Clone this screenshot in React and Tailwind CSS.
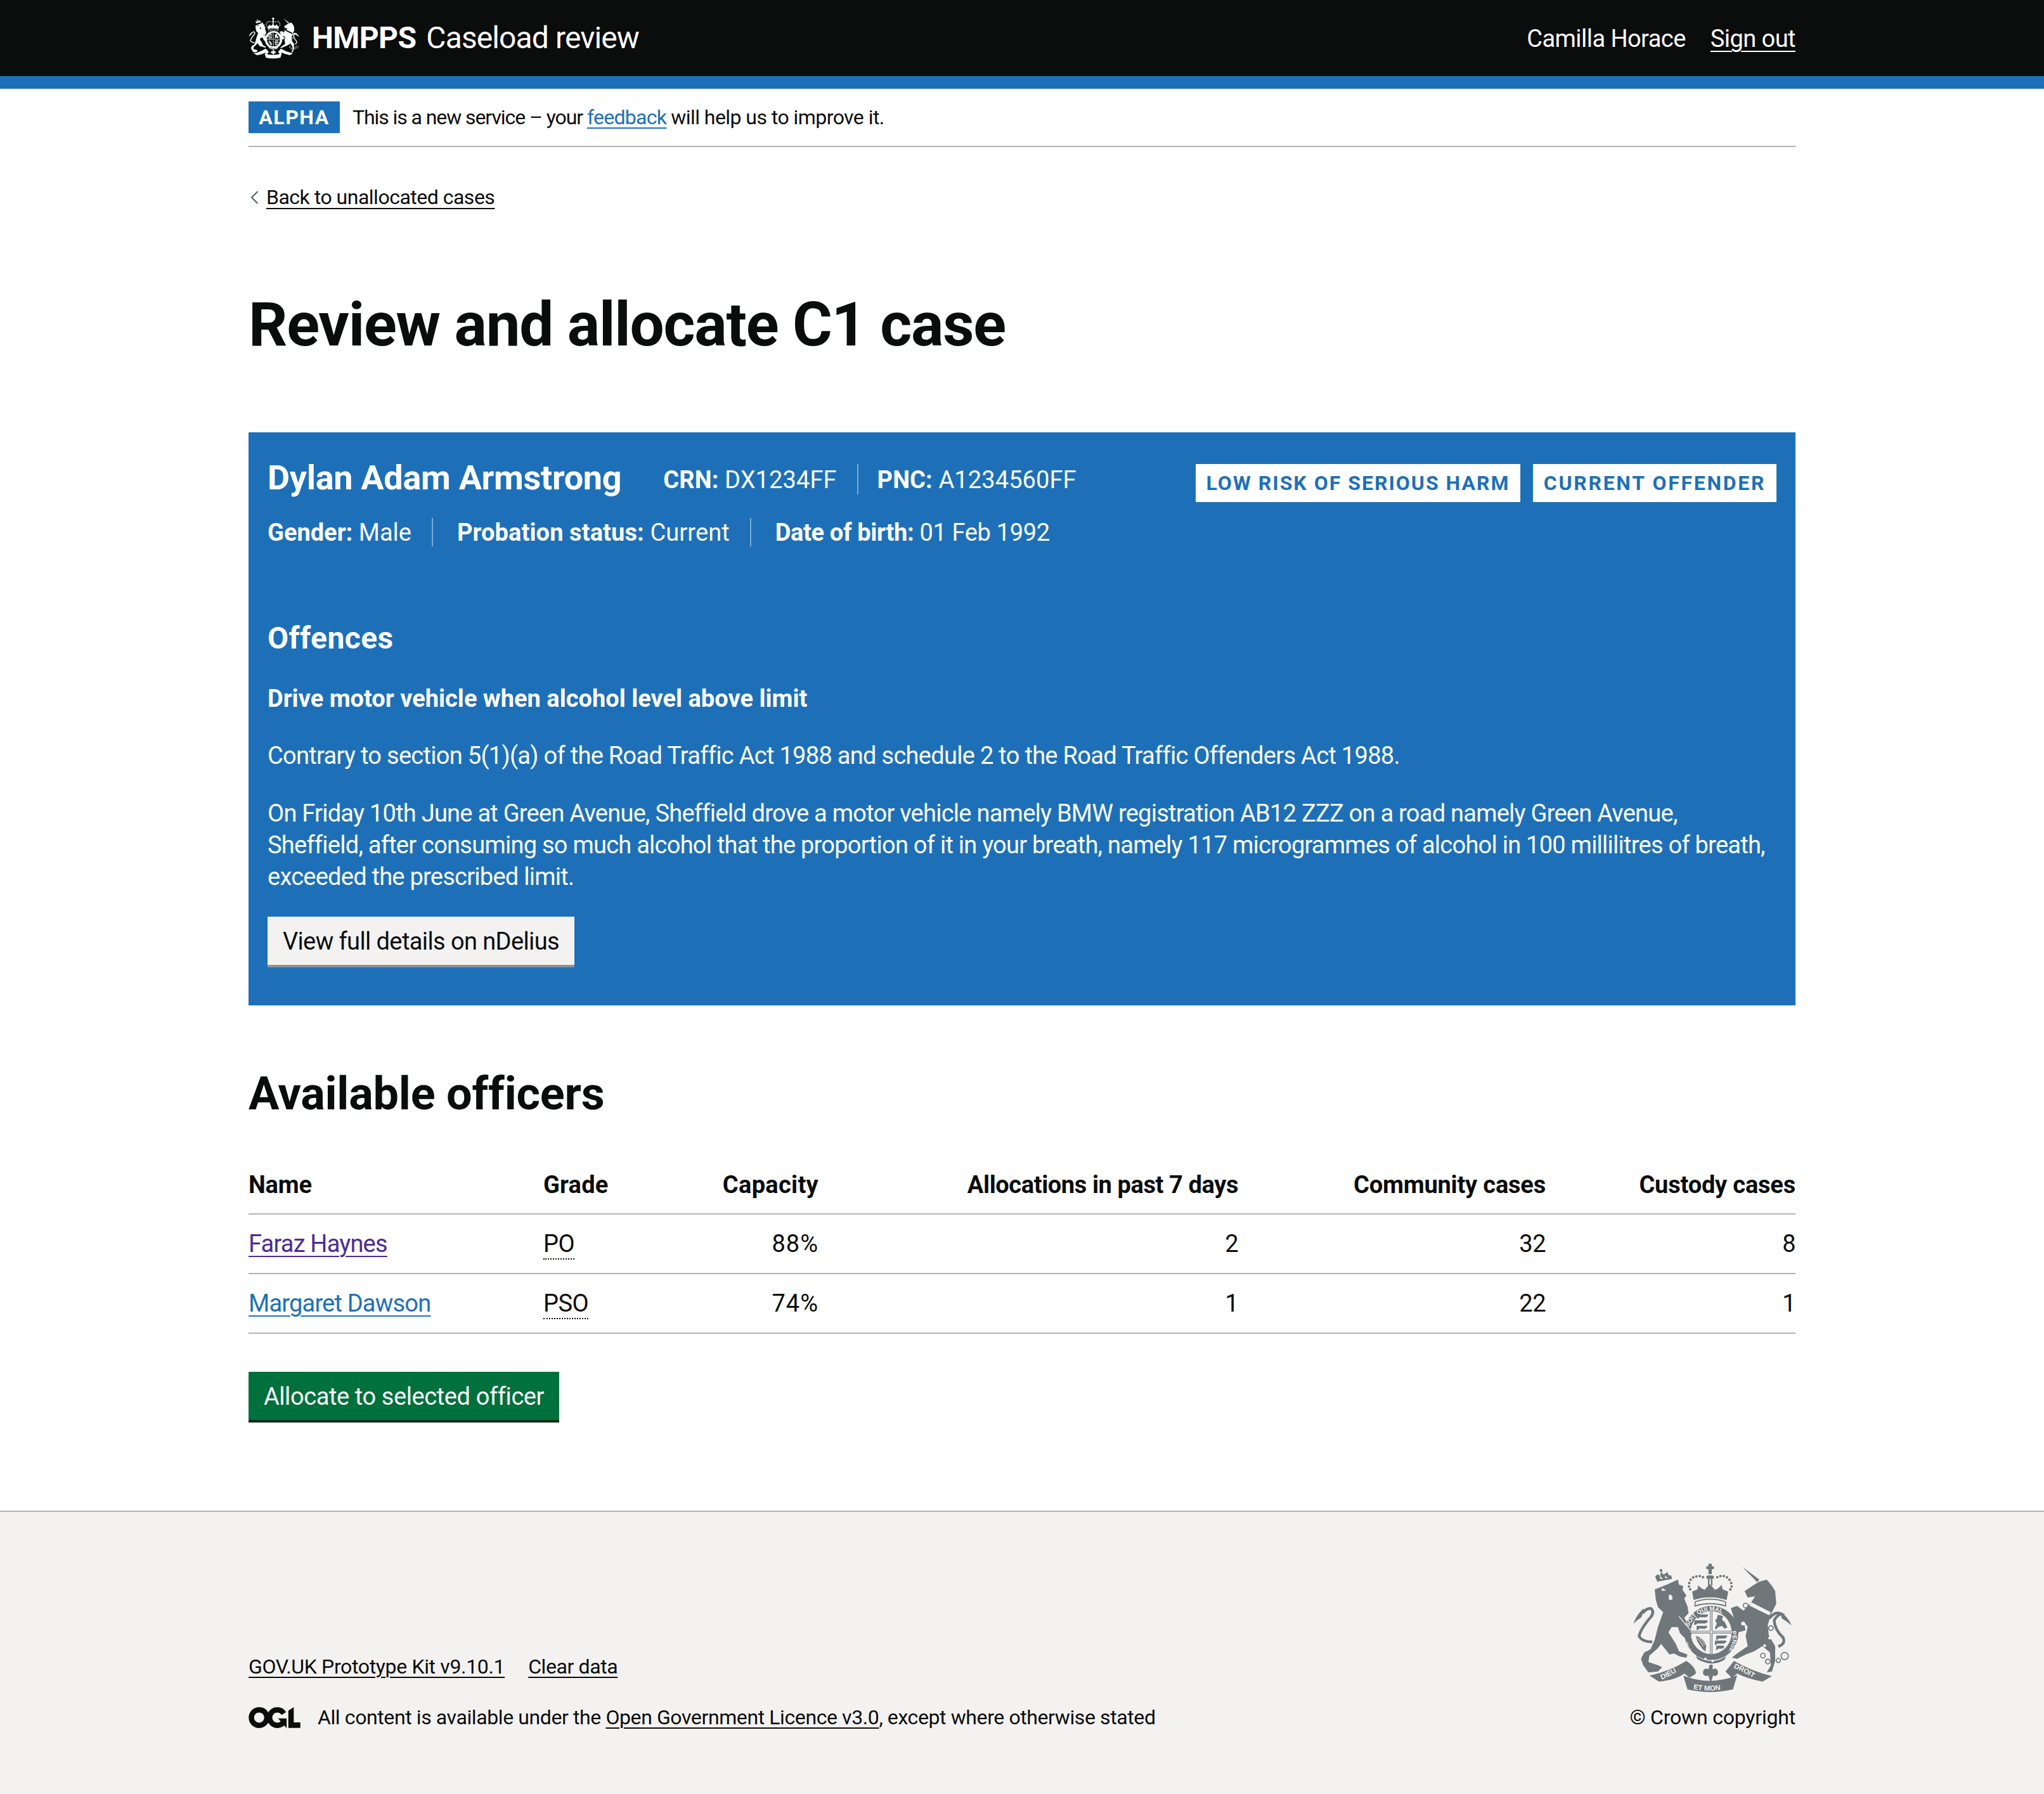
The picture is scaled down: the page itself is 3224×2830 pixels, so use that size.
const Crest = ({ color, bg, labels = true, className }) => (
  <svg viewBox="228 138 750 612" className={className} aria-hidden="true">
    <defs>
      <path id="garter-top" d="M488,455 A112,114 0 0 1 704,440" />
      <path id="garter-left" d="M520,572 A112,116 0 0 1 484,490" />
      <path id="garter-right" d="M692,455 A114,116 0 0 1 660,578" />
      <path id="ribbon-left" d="M358,692 Q420,665 468,628" />
      <path id="ribbon-mid" d="M505,732 Q592,750 682,730" />
      <path id="ribbon-right" d="M700,632 Q770,660 826,702" />
    </defs>
    {/* lion */}
    <path fill={color} d="M330,262 L385,240 L440,215 L445,240 L465,245 L462,265 L480,290 L470,305 L486,345 L490,375 L470,395 L500,450 L495,490 L470,490 L450,470 L440,440 L410,440 L395,465 L430,520 L445,555 L485,570 L480,585 L450,580 L420,565 L400,570 L360,520 L345,540 L305,575 L300,605 L345,620 L365,630 L345,650 L300,655 L275,620 L265,590 L280,560 L310,545 L330,500 L345,440 L370,370 L345,345 L335,310 Z" />
    <path d="M318,510 Q272,510 256,484 Q262,450 312,392 Q330,366 312,352 Q290,350 272,375" fill="none" stroke={color} strokeWidth="13" />
    <path d="M230,425 Q240,385 278,352 Q272,392 262,398 Q248,404 230,425 Z" fill={color} />
    <g fill={color}>
      <path d="M342,225 L332,200 L345,190 L356,198 L360,178 L372,192 L390,180 L396,194 L408,196 L412,212 Z" />
      <path d="M354,178 h12 v-12 h-12 z" />
    </g>
    <g fill={bg}>
      <path d="M352,196 l6,18 l10,-4 z M376,196 l6,14 l10,-4 z" />
      <path d="M365,255 L385,268 L362,268 Z" />
      <path d="M400,285 q16,4 14,24 l-14,4 q-8,-14 0,-28 z" />
    </g>
    {/* unicorn */}
    <g fill={color}>
      <path d="M745,155 L825,215 L815,228 Z" />
      <path d="M755,270 L800,240 L825,225 L860,215 L885,245 L900,270 L905,330 L880,380 L865,430 L870,480 L900,530 L900,600 L885,650 L860,655 L880,620 L875,560 L840,530 L800,555 L760,570 L720,590 L695,585 L720,565 L770,530 L760,480 L770,440 L750,410 L760,455 L725,465 L705,400 L690,350 L720,340 L750,362 L785,325 L805,295 L770,300 Z" />
    </g>
    <path d="M872,400 Q900,362 930,378 Q905,385 895,410 Q900,455 938,490 Q950,520 915,532" fill="none" stroke={color} strokeWidth="13" />
    <path d="M928,372 Q955,385 978,432 Q950,410 930,398 Z" fill={color} />
    <g fill={bg}>
      <path d="M785,322 L880,370 L872,385 L778,338 Z" />
      <circle cx="874" cy="492" r="7" />
      <circle cx="850" cy="528" r="7" />
      <circle cx="748" cy="424" r="9" />
    </g>
    <path d="M790,322 l8,-8 l6,12 l10,-4 l4,12 l12,-4 l4,12 l12,-4 l4,12 l12,-2 l6,10" fill="none" stroke={color} strokeWidth="5" />
    <g fill="none" stroke={color} strokeWidth="5">
      <circle cx="760" cy="338" r="11" />
      <circle cx="880" cy="445" r="11" />
      <circle cx="842" cy="575" r="11" />
      <circle cx="865" cy="603" r="11" />
      <circle cx="915" cy="598" r="10" />
      <circle cx="945" cy="577" r="17" />
    </g>
    {/* crown */}
    <g fill={color}>
      <path d="M584,140 h16 v12 h10 v14 h-10 v24 h-16 v-24 h-10 v-14 h10 z" />
      <rect x="582" y="212" width="7" height="32" />
      <rect x="596" y="212" width="7" height="32" />
      <rect x="574" y="196" width="36" height="16" rx="8" />
      {[[558, 204], [543, 199], [527, 200], [512, 205], [500, 216], [493, 232], [492, 248], [498, 262], [626, 204], [641, 199], [657, 199], [672, 205], [684, 216], [692, 232], [694, 248], [688, 262]].map(([cx, cy]) => (
        <circle key={cx} cx={cx} cy={cy} r="6" />
      ))}
      <path d="M507,272 L532,262 L536,242 L550,256 L566,264 L590,236 L616,264 L632,256 L646,240 L652,262 L678,272 L670,312 Q592,286 514,312 Z" />
    </g>
    <path d="M522,320 Q592,296 664,320 L666,340 Q592,318 520,340 Z" fill="none" stroke={color} strokeWidth="5" />
    {/* shield and garter */}
    <ellipse cx="598" cy="468" rx="128" ry="128" fill={color} />
    <ellipse cx="597" cy="466" rx="97" ry="102" fill={bg} />
    <g fill={color}>
      <rect x="591" y="365" width="12" height="203" />
      <rect x="500" y="458" width="196" height="12" />
    </g>
    <rect x="594" y="365" width="5" height="203" fill={bg} />
    <rect x="500" y="461" width="196" height="5" fill={bg} />
    <g fill={color}>
      <path d="M532,380 h50 v8 l-10,6 h-30 l-6,6 h-6 z" />
      <path d="M518,408 h62 v9 l-12,6 h-36 l-8,6 h-8 z" />
      <path d="M528,434 h50 v8 l-10,6 h-28 l-6,6 h-6 z" />
      <path d="M628,382 l26,6 l-6,16 l14,14 l12,24 l-14,6 l-12,-14 l-18,6 l-8,10 l-8,-4 l10,-22 l-8,-16 l8,-8 z" />
      <path d="M524,482 q34,6 50,46 l-4,28 q-34,-22 -46,-74 z" />
      <path d="M622,480 h50 v8 l-10,6 h-30 l-6,6 h-6 z" />
      <path d="M616,504 h52 v8 l-10,6 h-32 l-6,6 h-6 z" />
      <path d="M622,528 h36 v8 l-8,6 h-20 l-4,6 h-6 z" />
    </g>
    <path d="M533,492 l28,40 M543,490 l25,36 M529,508 l26,36" stroke={bg} strokeWidth="3" />
    {labels && (
      <g fill={bg} fontFamily="'Liberation Sans', sans-serif" fontWeight="700" fontSize="29">
        <text><textPath href="#garter-top" startOffset="5%">SOIT QUI MAL</textPath></text>
        <text><textPath href="#garter-left" startOffset="2%">HONI</textPath></text>
        <text><textPath href="#garter-right" startOffset="4%">PENSE</textPath></text>
      </g>
    )}
    <path d="M525,575 Q600,625 668,578 L660,595 Q600,632 532,592 Z" fill={color} />
    <circle cx="570" cy="590" r="6" fill={bg} />
    <circle cx="604" cy="600" r="6" fill={bg} />
    {/* lion's paw over the garter */}
    <path d="M445,390 L500,455" stroke={bg} strokeWidth="4" />
    <path d="M470,440 L505,470 L498,492 L470,490 Z" fill={color} />
    {/* motto ribbons */}
    <g fill={color}>
      <path d="M305,670 Q400,650 480,600 Q525,630 525,660 L495,680 L470,660 Q430,690 350,698 Z" />
      <path d="M465,670 Q590,720 720,668 L700,735 Q590,760 485,735 Z" />
      <path d="M665,650 Q690,620 705,600 Q790,650 885,672 L840,698 Q770,685 720,660 L695,680 Z" />
      <path d="M590,618 h14 v22 q22,-10 26,14 q-2,22 -24,16 l-8,26 h-6 l-8,-26 q-24,6 -26,-16 q4,-24 26,-14 z" />
    </g>
    {labels && (
      <g fill={bg} fontFamily="'Liberation Sans', sans-serif" fontWeight="700" fontSize="34">
        <text><textPath href="#ribbon-left" startOffset="5%">DIEU</textPath></text>
        <text><textPath href="#ribbon-mid" startOffset="4%">ET MON</textPath></text>
        <text><textPath href="#ribbon-right" startOffset="2%">DROIT</textPath></text>
      </g>
    )}
  </svg>
);

const OglLogo = () => (
  <svg viewBox="0 0 483.2 195.7" className="w-[82px] h-[33px] shrink-0" aria-hidden="true">
    <path fill="#0b0c0c" d="M421.5 142.8V.1l-50.7 32.3v161.1h112.4v-50.7zm-122.3-9.6A47.12 47.12 0 0 1 221 97.8c0-26 21.1-47.1 47.1-47.1 16.7 0 31.4 8.7 39.7 21.8l42.7-27.2A97.63 97.63 0 0 0 268.1 0c-36.5 0-68.3 20.1-85.1 49.7A98 98 0 0 0 97.8 0C43.9 0 0 43.9 0 97.8s43.9 97.8 97.8 97.8c36.5 0 68.3-20.1 85.1-49.7a97.76 97.76 0 0 0 149.6 25.4l19.4 22.2h3v-87.8h-80l24.3 27.5zM97.8 145c-26 0-47.1-21.1-47.1-47.1s21.1-47.1 47.1-47.1 47.2 21 47.2 47S123.8 145 97.8 145" />
  </svg>
);

const Header = () => (
  <header>
    <div className="h-[120px] bg-[#0b0c0c] text-white">
      <div className="w-[2440px] mx-auto h-full flex items-center justify-between">
        <div className="flex items-center">
          <Crest color="#ffffff" bg="#0b0c0c" labels={false} className="w-[80px] h-[66px]" />
          <span className="ml-[20px] text-[48px] font-bold leading-[60px] tracking-[-0.6px]">HMPPS</span>
          <span className="ml-[16px] text-[48px] leading-[60px] tracking-[-0.9px]">Caseload review</span>
        </div>
        <div className="flex items-center text-[38px] leading-[50px] tracking-[-0.55px] pt-[2px]">
          <span>Camilla Horace</span>
          <a href="#" className="ml-[39px] underline underline-offset-[6px] decoration-2">Sign out</a>
        </div>
      </div>
    </div>
    <div className="h-[20px] bg-[#1d70b8]" />
  </header>
);

const Divider = ({ className }) => <span className={`w-[2px] self-stretch bg-white/40 ${className}`} />;

const Field = ({ label, value, className = '' }) => (
  <span className={`whitespace-pre ${className}`}>
    <b className="font-bold">{label}:</b> {value}
  </span>
);

const CasePanel = () => (
  <section className="mt-[120px] bg-[#1d70b8] text-white pl-[30px] pr-[30px] pt-[50px] pb-[64px]">
    <div className="flex justify-between items-start">
      <div>
        <div className="flex h-[48px] items-center text-[38px] leading-[48px] tracking-[0.1px]">
          <h2 className="text-[54px] font-bold tracking-[-0.3px] leading-[48px] mb-[4px]">Dylan Adam Armstrong</h2>
          <span className="ml-[66px] pt-[2px]"><Field label="CRN" value="DX1234FF" /></span>
          <Divider className="ml-[32px] mr-[30px]" />
          <span className="pt-[2px]"><Field label="PNC" value="A1234560FF" /></span>
        </div>
        <div className="flex h-[46px] mt-[36px] items-center text-[38px] leading-[46px] pt-[1px]">
          <Field label="Gender" value="Male" />
          <Divider className="ml-[32px] mr-[38px]" />
          <Field label="Probation status" value="Current" className="tracking-[0.1px]" />
          <Divider className="ml-[32px] mr-[38px]" />
          <Field label="Date of birth" value="01 Feb 1992" className="tracking-[-0.35px]" />
        </div>
      </div>
      <div className="flex gap-[20px]">
        <strong className="h-[60px] w-[512px] bg-white text-[#1d70b8] text-[32px] font-bold tracking-[2px] uppercase flex items-center justify-center">Low risk of serious harm</strong>
        <strong className="h-[60px] w-[384px] bg-white text-[#1d70b8] text-[32px] font-bold tracking-[2.7px] uppercase flex items-center justify-center">Current offender</strong>
      </div>
    </div>
    <h3 className="mt-[115px] text-[48px] font-bold leading-[60px] tracking-[0.4px]">Offences</h3>
    <p className="mt-[40px] text-[38px] font-bold leading-[50px] tracking-[0px]">Drive motor vehicle when alcohol level above limit</p>
    <p className="mt-[40px] text-[38px] leading-[50px] tracking-[-0.7px]">Contrary to section 5(1)(a) of the Road Traffic Act 1988 and schedule 2 to the Road Traffic Offenders Act 1988.</p>
    <p className="mt-[41px] text-[38px] leading-[50px] tracking-[-0.75px] w-[2370px]">
      On Friday 10th June at Green Avenue, Sheffield drove a motor vehicle namely BMW registration AB12 ZZZ on a road namely Green Avenue, Sheffield, after consuming so much alcohol that the proportion of it in your breath, namely 117 microgrammes of alcohol in 100 millilitres of breath, exceeded the prescribed limit.
    </p>
    <button className="mt-[38px] block h-[76px] w-[484px] pt-[2px] bg-[#f3f2f1] text-[#0b0c0c] text-[38px] tracking-[-0.6px] shadow-[0_4px_0_#929191]">View full details on nDelius</button>
  </section>
);

const officers = [
  { name: 'Faraz Haynes', grade: 'PO', capacity: '88%', recent: 2, community: 32, custody: 8, linkColor: 'text-[#4c2c92]' },
  { name: 'Margaret Dawson', grade: 'PSO', capacity: '74%', recent: 1, community: 22, custody: 1, linkColor: 'text-[#1d70b8]' },
];

const OfficersTable = () => (
  <table className="mt-[59px] w-full table-fixed border-collapse text-[38px] tracking-[-0.5px]">
    <colgroup>
      <col className="w-[465px]" />
      <col className="w-[200px]" />
      <col className="w-[234px]" />
      <col className="w-[662px]" />
      <col className="w-[485px]" />
      <col className="w-[394px]" />
    </colgroup>
    <thead>
      <tr className="h-[90px] border-b-2 border-[#b1b4b6] text-left font-bold tracking-[-0.2px]">
        <th>Name</th>
        <th className="tracking-[0.2px]">Grade</th>
        <th className="text-right tracking-[0.3px]">Capacity</th>
        <th className="text-right tracking-[-0.4px]">Allocations in past 7 days</th>
        <th className="text-right">Community cases</th>
        <th className="text-right">Custody cases</th>
      </tr>
    </thead>
    <tbody>
      {officers.map(officer => (
        <tr key={officer.name} className="h-[94px] border-b-2 border-[#b1b4b6]">
          <td className="tracking-[-0.8px]"><a href="#" className={`underline underline-offset-[6px] decoration-2 ${officer.linkColor}`}>{officer.name}</a></td>
          <td><abbr className="inline-block no-underline leading-[46px] border-b-2 border-dotted border-[#0b0c0c]">{officer.grade}</abbr></td>
          <td className="text-right tracking-[1px]">{officer.capacity}</td>
          <td className="text-right">{officer.recent}</td>
          <td className="text-right">{officer.community}</td>
          <td className="text-right">{officer.custody}</td>
        </tr>
      ))}
    </tbody>
  </table>
);

const Footer = () => (
  <footer className="mt-[143px] border-t-2 border-[#b1b4b6] bg-[#f3f2f1] text-[32px] leading-[40px] tracking-[-0.4px]">
    <div className="w-[2440px] mx-auto flex justify-between pt-[81px] pb-[101px]">
      <div className="flex flex-col justify-end">
        <div className="flex gap-[37px] mb-[40px]">
          <a href="#" className="underline underline-offset-[5px] decoration-2 tracking-[-0.35px]">GOV.UK Prototype Kit v9.10.1</a>
          <a href="#" className="underline underline-offset-[5px] decoration-2">Clear data</a>
        </div>
        <div className="flex items-center">
          <OglLogo />
          <span className="ml-[27px]">All content is available under the <a href="#" className="underline underline-offset-[5px] decoration-2">Open Government Licence v3.0</a>, except where otherwise stated</span>
        </div>
      </div>
      <div className="flex flex-col items-end">
        <Crest color="#6f777b" bg="#f3f2f1" className="w-[250px] h-[204px] mr-[6px]" />
        <span className="mt-[19px] tracking-[-0.2px]">© Crown copyright</span>
      </div>
    </div>
  </footer>
);

export default function App() {
  return (
    <div className="font-['Roboto',sans-serif] text-[#0b0c0c] bg-white">
      <Header />
      <main className="w-[2440px] mx-auto">
        <div className="pt-[20px] pb-[20px] border-b-2 border-[#b1b4b6] flex items-center text-[32px] leading-[40px]">
          <strong className="h-[50px] w-[144px] bg-[#1d70b8] text-white font-bold tracking-[1.5px] flex items-center justify-center">ALPHA</strong>
          <span className="ml-[20px] tracking-[-1.08px]">This is a new service – your <a href="#" className="text-[#1d70b8] tracking-[-0.7px] underline underline-offset-[5px] decoration-2">feedback</a> <span className="tracking-[-0.55px]">will help us to improve it.</span></span>
        </div>
        <a href="#" className="mt-[59px] flex items-center h-[40px] text-[32px] leading-[40px] tracking-[-0.5px]">
          <svg viewBox="0 0 13 21" className="w-[13px] h-[21px] ml-[3px] mr-[12px]" aria-hidden="true">
            <path d="M11.5 1 2 10.5 11.5 20" fill="none" stroke="#505a5f" strokeWidth="2" />
          </svg>
          <span className="underline underline-offset-[6px] decoration-2">Back to unallocated cases</span>
        </a>
        <h1 className="mt-[131px] text-[96px] font-bold leading-[100px] tracking-[-1.2px]">Review and allocate C1 case</h1>
        <CasePanel />
        <h2 className="mt-[100px] text-[72px] font-bold leading-[80px] tracking-[-0.2px]">Available officers</h2>
        <OfficersTable />
        <button className="mt-[60px] block h-[76px] w-[490px] pt-[2px] bg-[#00703c] text-white text-[38px] tracking-[-0.4px] shadow-[0_4px_0_#002d18]">Allocate to selected officer</button>
      </main>
      <Footer />
    </div>
  );
}
